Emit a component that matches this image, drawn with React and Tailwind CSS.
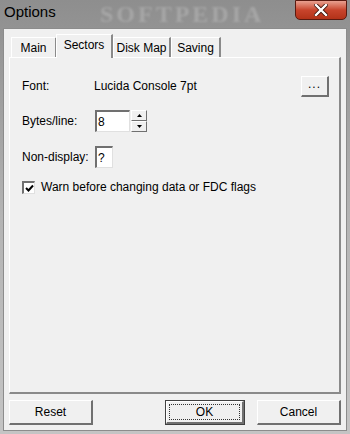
import React from "react";

const font = { fontFamily: '"Liberation Sans", Arial, sans-serif' };

const Btn = ({ children, focused, className = "" }) => (
  <div
    className={`h-[25px] flex items-center justify-center text-[12px] text-black bg-[#f0f0f0] ${
      focused
        ? "border border-[#404040]"
        : "border-t border-l border-t-white border-l-white border-b-2 border-r-2 border-b-[#707070] border-r-[#707070]"
    } ${className}`}
  >
    {focused ? (
      <div className="w-full h-full flex items-center justify-center border-t border-l border-t-white border-l-white border-b-2 border-r-2 border-b-[#707070] border-r-[#707070] p-[2px]">
        <div className="w-full h-full flex items-center justify-center border border-dotted border-[#333]">
          {children}
        </div>
      </div>
    ) : (
      children
    )}
  </div>
);

const Tab = ({ label, active, className = "" }) => (
  <div
    className={`flex items-center justify-center text-[12px] text-black border-t border-l border-t-white border-l-white border-r-2 border-r-[#8a8a8a] bg-[#f0f0f0] ${
      active ? "h-[24px] relative z-10 -mb-[1px] pb-[3px]" : "h-[20px]"
    } ${className}`}
  >
    {label}
  </div>
);

export default function App() {
  return (
    <div
      className="w-[350px] h-[434px] flex flex-col relative overflow-hidden bg-gradient-to-b from-[#8e8e8e] via-[#b4b4b4] to-[#c4c4c4]"
      style={font}
    >
      {/* title bar */}
      <div className="h-[28px] flex items-center relative">
        <span
          className="absolute left-[100px] top-[2px] text-[24px] leading-[24px] font-bold tracking-[3px] text-white/20 blur-[1px] select-none"
          style={{ fontFamily: '"Liberation Serif", serif' }}
        >
          SOFTPEDIA
        </span>
        <span className="ml-[4px] mb-[4px] text-[15px] text-black relative">Options</span>
        <div className="ml-auto mr-[3px] self-start w-[52px] h-[20px] rounded-b-[5px] border border-[#5a1a10] bg-gradient-to-b from-[#e8a090] via-[#c8442c] to-[#b23218] flex items-center justify-center relative z-10">
          <svg width="14" height="12" viewBox="0 0 14 12">
            <path d="M2 1 L12 11 M12 1 L2 11" stroke="#3a1008" strokeWidth="4" strokeLinecap="square" />
            <path d="M2 1 L12 11 M12 1 L2 11" stroke="white" strokeWidth="2.4" strokeLinecap="square" />
          </svg>
        </div>
      </div>

      {/* client area */}
      <div className="mx-[3px] mb-[3px] flex-1 bg-[#f0f0f0] border border-[#8c8c8c] flex flex-col px-[5px]">
        {/* tabs */}
        <div className="flex items-end mt-[4px] pl-[2px] h-[24px]">
          <Tab label="Main" className="w-[46px]" />
          <Tab label="Sectors" active className="w-[57px] -ml-[1px]" />
          <Tab label="Disk Map" className="w-[58px]" />
          <Tab label="Saving" className="w-[50px]" />
        </div>

        {/* panel */}
        <div className="h-[337px] bg-[#f0f0f0] border-t border-l border-t-white border-l-white border-b-2 border-r-2 border-b-[#8a8a8a] border-r-[#8a8a8a] flex flex-col pl-[12px] pr-[10px] pt-[17px] text-[12px] text-black">
          <div className="flex items-center h-[22px]">
            <span className="w-[72px]">Font:</span>
            <span>Lucida Console 7pt</span>
            <div className="ml-auto w-[28px] h-[21px] flex items-center justify-center border-t border-l border-t-white border-l-white border-b-2 border-r-2 border-b-[#707070] border-r-[#707070] text-[12px] leading-none pb-[3px] tracking-[1px]">
              ...
            </div>
          </div>

          <div className="flex items-center h-[22px] mt-[13px]">
            <span className="w-[73px]">Bytes/line:</span>
            <div className="w-[35px] h-[22px] bg-white border-t-2 border-l-2 border-t-[#707070] border-l-[#707070] border-b border-r border-b-[#e0e0e0] border-r-[#e0e0e0] flex items-center pl-[1px]">
              8
            </div>
            <div className="ml-[1px] w-[16px] h-[22px] flex flex-col">
              <div className="h-[11px] flex items-center justify-center border-t border-l border-t-white border-l-white border-b border-r border-b-[#707070] border-r-[#707070]">
                <svg width="5" height="3" viewBox="0 0 5 3"><path d="M2.5 0 L5 3 L0 3 Z" fill="#000" /></svg>
              </div>
              <div className="h-[11px] flex items-center justify-center border-t border-l border-t-white border-l-white border-b border-r border-b-[#707070] border-r-[#707070]">
                <svg width="5" height="3" viewBox="0 0 5 3"><path d="M0 0 L5 0 L2.5 3 Z" fill="#000" /></svg>
              </div>
            </div>
          </div>

          <div className="flex items-center h-[22px] mt-[14px]">
            <span className="w-[73px]">Non-display:</span>
            <div className="w-[18px] h-[22px] bg-white border-t-2 border-l-2 border-t-[#707070] border-l-[#707070] border-b border-r border-b-[#e0e0e0] border-r-[#e0e0e0] flex items-center pl-[1px]">
              ?
            </div>
          </div>

          <div className="flex items-center h-[16px] mt-[11px]">
            <div className="w-[13px] h-[13px] bg-white border-t-2 border-l-2 border-t-[#707070] border-l-[#707070] border-b border-r border-b-[#e0e0e0] border-r-[#e0e0e0] flex items-center justify-center">
              <svg width="9" height="8" viewBox="0 0 9 8">
                <path d="M1 4 L3.5 6.5 L8 1.5" stroke="#000" strokeWidth="2" fill="none" />
              </svg>
            </div>
            <span className="ml-[6px]">Warn before changing data or FDC flags</span>
          </div>
        </div>

        {/* buttons */}
        <div className="flex items-center mt-[6px]">
          <Btn className="w-[84px]">Reset</Btn>
          <Btn focused className="w-[80px] ml-auto">OK</Btn>
          <Btn className="w-[84px] ml-[12px]">Cancel</Btn>
        </div>
      </div>
    </div>
  );
}
